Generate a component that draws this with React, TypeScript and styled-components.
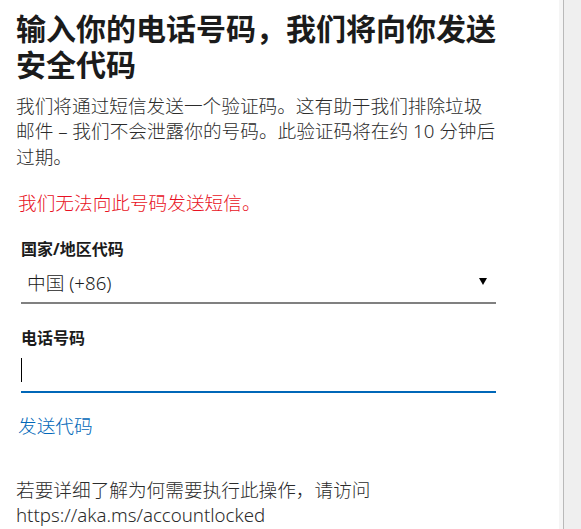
import styled, { createGlobalStyle } from 'styled-components';

const GlobalStyle = createGlobalStyle`
  html, body {
    margin: 0;
    padding: 0;
    background: #ffffff;
  }
  body {
    font-family: 'Noto Sans', 'Noto Sans CJK SC', sans-serif;
    color: #1b1b1b;
  }
`;

const Page = styled.div`
  display: flex;
  height: 529px;
  overflow: hidden;
`;

const Main = styled.main`
  width: 559px;
  flex-shrink: 0;
  padding: 11px 0 0 16px;
  box-sizing: border-box;
`;

const Content = styled.div`
  width: 482px;
`;

const Side = styled.aside`
  flex: 1;
  background: #efefef;
  border-left: 4px solid #f5f5f5;
  box-shadow: inset 1px 0 0 #b9b9b9;
`;

const Title = styled.h1`
  margin: 0;
  font-size: 30px;
  line-height: 36px;
  font-weight: 700;
  color: #1b1b1b;
`;

const Text = styled.p<{ $top?: number }>`
  margin: ${({ $top }) => $top ?? 0}px 0 0;
  font-size: 18.67px;
  line-height: 25.3px;
  font-weight: 300;
  color: #2b2b2b;
`;

const ErrorText = styled.div`
  margin: 21px 0 0 2px;
  font-size: 18.67px;
  line-height: 25px;
  font-weight: 300;
  color: #e81123;
`;

const Field = styled.div<{ $top: number }>`
  margin: ${({ $top }) => $top}px 0 0 5px;
  width: 475px;
`;

const Label = styled.label`
  display: block;
  font-size: 16px;
  line-height: 21px;
  font-weight: 700;
  color: #1b1b1b;
`;

const Select = styled.div`
  display: flex;
  align-items: center;
  justify-content: space-between;
  padding: 10px 9px 7px 6px;
  font-size: 18.67px;
  line-height: 25px;
  font-weight: 300;
  color: #1b1b1b;
  border-bottom: 2px solid #808080;
`;

const Arrow = styled.span`
  width: 0;
  height: 0;
  margin-top: -2px;
  border-left: 4px solid transparent;
  border-right: 4px solid transparent;
  border-top: 7px solid #000000;
`;

const Input = styled.div`
  display: flex;
  align-items: center;
  height: 24px;
  padding: 9px 0;
  border-bottom: 2px solid #0067b8;
`;

const Caret = styled.span`
  width: 1px;
  height: 24px;
  background: #000000;
`;

const Link = styled.a`
  display: block;
  margin: 20px 0 0 2px;
  font-size: 18.67px;
  line-height: 25px;
  font-weight: 300;
  color: #0067b8;
  text-decoration: none;
`;

export default function App() {
  return (
    <>
      <GlobalStyle />
      <Page>
        <Main>
          <Content>
            <Title>输入你的电话号码，我们将向你发送安全代码</Title>
            <Text $top={10}>
              我们将通过短信发送一个验证码。这有助于我们排除垃圾邮件 – 我们不会泄露你的号码。此验证码将在约 10 分钟后过期。
            </Text>
            <ErrorText>我们无法向此号码发送短信。</ErrorText>
            <Field $top={24}>
              <Label>国家/地区代码</Label>
              <Select>
                <span>中国 (+86)</span>
                <Arrow />
              </Select>
            </Field>
            <Field $top={24}>
              <Label>电话号码</Label>
              <Input>
                <Caret />
              </Input>
            </Field>
            <Link href="#">发送代码</Link>
            <Text $top={39}>
              若要详细了解为何需要执行此操作，请访问 https://aka.ms/accountlocked
            </Text>
          </Content>
        </Main>
        <Side />
      </Page>
    </>
  );
}
